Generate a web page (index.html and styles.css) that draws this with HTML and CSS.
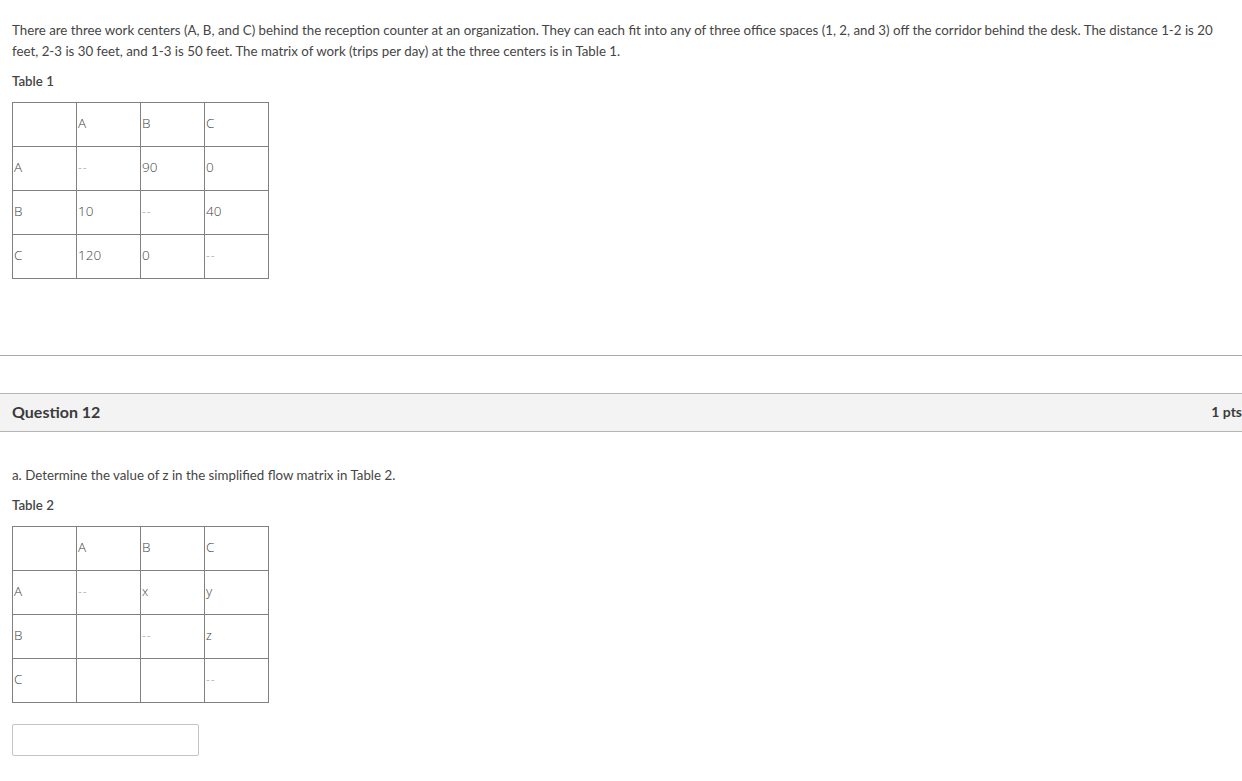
FILE: index.html
```html
<!DOCTYPE html>
<html>
<head>
<meta charset="utf-8">
<link rel="stylesheet" href="styles.css">
</head>
<body>
<div class="prev">
  <p class="para">There are three work centers (A, B, and C) behind the reception counter at an organization. They can each fit into any of three office spaces (1, 2, and 3) off the corridor behind the desk. The distance 1-2 is 20 feet, 2-3 is 30 feet, and 1-3 is 50 feet. The matrix of work (trips per day) at the three centers is in Table 1.</p>
  <p class="caption">Table 1</p>
  <table class="grid">
    <tr><td></td><td>A</td><td>B</td><td>C</td></tr>
    <tr><td>A</td><td class="dash">--</td><td>90</td><td>0</td></tr>
    <tr><td>B</td><td>10</td><td class="dash">--</td><td>40</td></tr>
    <tr><td>C</td><td>120</td><td>0</td><td class="dash">--</td></tr>
  </table>
</div>
<hr class="sep">
<div class="qhead">
  <span class="qtitle">Question 12</span>
  <span class="pts">1 pts</span>
</div>
<div class="qbody">
  <p class="para">a. Determine the value of z in the simplified flow matrix in Table 2.</p>
  <p class="caption">Table 2</p>
  <table class="grid">
    <tr><td></td><td>A</td><td>B</td><td>C</td></tr>
    <tr><td>A</td><td class="dash">--</td><td class="sm">x</td><td>y</td></tr>
    <tr><td>B</td><td></td><td class="dash">--</td><td class="sm">z</td></tr>
    <tr><td>C</td><td></td><td></td><td class="dash">--</td></tr>
  </table>
  <input class="answer" type="text">
</div>
</body>
</html>
```

FILE: styles.css
```css
html, body {
  margin: 0;
  padding: 0;
  background: #fff;
}
body {
  font-family: Lato, "Liberation Sans", sans-serif;
  color: #454545;
  font-size: 13.3px;
  overflow: hidden;
}
.prev {
  padding: 20px 12px 0 12px;
  height: 335px;
}
.para {
  margin: 0;
  line-height: 21px;
}
.caption {
  margin: 9px 0 11px 0;
  font-weight: 600;
  line-height: 20px;
}
.grid {
  border-collapse: collapse;
  border: 1px solid #808080;
}
.grid td {
  width: 62px;
  height: 40px;
  border: 1px solid #808080;
  padding: 0 0 3px 1px;
  font-family: "Open Sans", Lato, sans-serif;
  font-weight: 300;
  font-size: 13.5px;
  vertical-align: middle;
  text-align: left;
  color: #444;
}
.grid td.dash {
  color: #999;
  font-size: 12px;
  letter-spacing: 1px;
}
.grid td.sm {
  font-size: 12.5px;
}
.sep {
  margin: 0;
  border: 0;
  border-top: 1px solid #aaa;
}
.qhead {
  margin-top: 37px;
  height: 34px;
  padding: 0 0 3px 12px;
  background: #f3f3f3;
  border-top: 1px solid #b5b5b5;
  border-bottom: 1px solid #b5b5b5;
  display: flex;
  justify-content: space-between;
  align-items: center;
}
.qtitle {
  font-size: 16px;
  font-weight: 700;
  color: #3b3b3b;
}
.pts {
  font-size: 14px;
  font-weight: 700;
  color: #3b3b3b;
  margin-right: 0;
}
.qbody {
  padding: 33px 12px 0 12px;
}
.answer {
  display: block;
  margin-top: 21px;
  width: 187px;
  height: 32px;
  box-sizing: border-box;
  border: 1px solid #c4c4c4;
  border-radius: 2px;
  padding: 0;
}
```
